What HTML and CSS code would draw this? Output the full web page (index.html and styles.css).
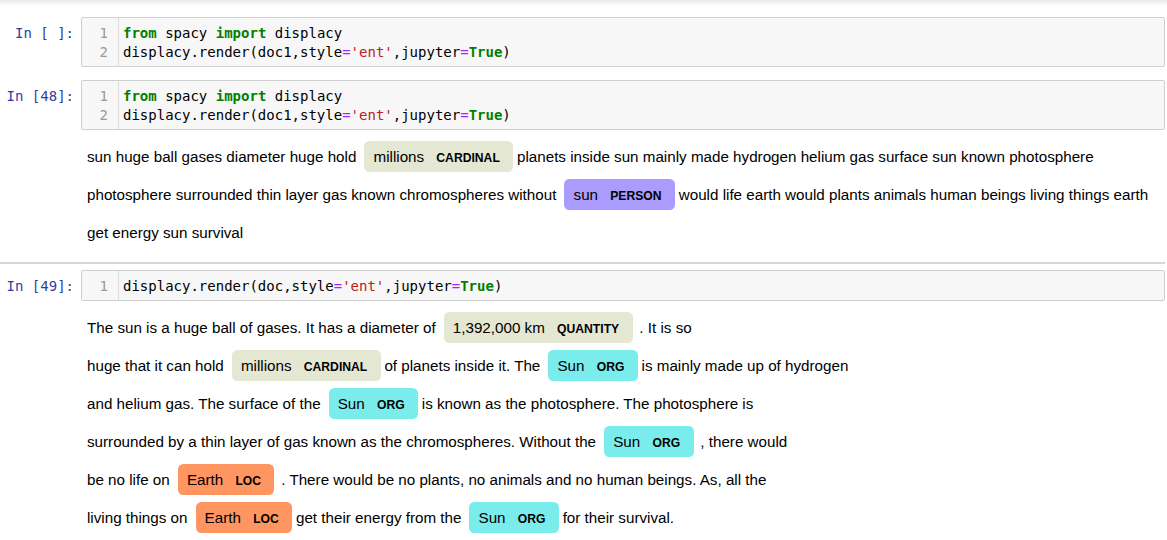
FILE: index.html
```html
<!DOCTYPE html>
<html>
<head>
<meta charset="utf-8">
<link rel="stylesheet" href="styles.css">
</head>
<body>
<div class="topbar"></div>
<div class="nb">
  <div class="cell first">
    <div class="prompt">In&nbsp;[&nbsp;]:</div>
    <div class="input">
      <div class="gutter"><div>1</div><div>2</div></div>
      <div class="code">
        <div class="ln"><span class="kw">from</span> spacy <span class="kw">import</span> displacy</div>
        <div class="ln">displacy.render(doc1,style<span class="op">=</span><span class="str">'ent'</span>,jupyter<span class="op">=</span><span class="kw">True</span>)</div>
      </div>
    </div>
  </div>

  <div class="cell">
    <div class="prompt">In&nbsp;[48]:</div>
    <div class="input">
      <div class="gutter"><div>1</div><div>2</div></div>
      <div class="code">
        <div class="ln"><span class="kw">from</span> spacy <span class="kw">import</span> displacy</div>
        <div class="ln">displacy.render(doc1,style<span class="op">=</span><span class="str">'ent'</span>,jupyter<span class="op">=</span><span class="kw">True</span>)</div>
      </div>
    </div>
    <div class="output">sun huge ball gases diameter huge hold <mark class="ent cardinal">millions <span class="lbl">CARDINAL</span> </mark> planets inside sun mainly made hydrogen helium gas surface sun known photosphere<br>photosphere surrounded thin layer gas known chromospheres without <mark class="ent person">sun <span class="lbl">PERSON</span> </mark> would life earth would plants animals human beings living things earth<br>get energy sun survival</div>
  </div>

  <div class="sep"></div>

  <div class="cell">
    <div class="prompt">In&nbsp;[49]:</div>
    <div class="input">
      <div class="gutter"><div>1</div></div>
      <div class="code">
        <div class="ln">displacy.render(doc,style<span class="op">=</span><span class="str">'ent'</span>,jupyter<span class="op">=</span><span class="kw">True</span>)</div>
      </div>
    </div>
    <div class="output">The sun is a huge ball of gases. It has a diameter of <mark class="ent cardinal">1,392,000 km <span class="lbl">QUANTITY</span> </mark> <span class="punct">. It is so</span><br>huge that it can hold <mark class="ent cardinal">millions <span class="lbl">CARDINAL</span> </mark> of planets inside it. The <mark class="ent org">Sun <span class="lbl">ORG</span> </mark> is mainly made up of hydrogen<br>and helium gas. The surface of the <mark class="ent org">Sun <span class="lbl">ORG</span> </mark> is known as the photosphere. The photosphere is<br>surrounded by a thin layer of gas known as the chromospheres. Without the <mark class="ent org">Sun <span class="lbl">ORG</span> </mark> <span class="punct">, there would</span><br>be no life on <mark class="ent loc">Earth <span class="lbl">LOC</span> </mark> <span class="punct">. There would be no plants, no animals and no human beings. As, all the</span><br>living things on <mark class="ent loc">Earth <span class="lbl">LOC</span> </mark> get their energy from the <mark class="ent org">Sun <span class="lbl">ORG</span> </mark> for their survival.</div>
  </div>
</div>
</body>
</html>
```
FILE: styles.css
```css
html, body {
  margin: 0;
  padding: 0;
  background: #fff;
}

.topbar {
  height: 6px;
  background: linear-gradient(to bottom, #e9e9e9, #ffffff);
}

.nb {
  padding: 0 2px 0 0;
}

.cell {
  display: grid;
  grid-template-columns: 81px 1fr;
  margin-top: 13px;
}

.cell.first {
  margin-top: 11px;
}

.prompt {
  font-family: "DejaVu Sans Mono", monospace;
  font-size: 14px;
  line-height: 19px;
  color: #303f9f;
  text-align: right;
  padding: 7px 7px 0 0;
  white-space: nowrap;
}

.input {
  display: flex;
  border: 1px solid #cfcfcf;
  border-radius: 2px;
  background: #f7f7f7;
  font-family: "DejaVu Sans Mono", monospace;
  font-size: 14px;
  line-height: 19px;
}

.gutter {
  width: 26px;
  padding: 6px 10px 4px 0;
  border-right: 1px solid #dddddd;
  color: #999999;
  text-align: right;
}

.code {
  padding: 6px 0 4px 4px;
  color: #000;
}

.ln {
  white-space: pre;
}

.kw {
  color: #008000;
  font-weight: bold;
}

.op {
  color: #aa22ff;
}

.str {
  color: #ba2121;
}

.output {
  grid-column: 2;
  padding: 8px 0 0 6px;
  font-family: "Liberation Sans", Arial, sans-serif;
  font-size: 15.2px;
  line-height: 38px;
  color: #000;
  white-space: nowrap;
}

.punct {
  margin-left: 3px;
}

.ent {
  padding: 0.45em 0.6em;
  margin: 0 0.25em;
  line-height: 1;
  border-radius: 0.35em;
  color: #000;
}

.lbl {
  font-size: 0.8em;
  font-weight: bold;
  line-height: 1;
  vertical-align: middle;
  margin-left: 0.5rem;
  text-transform: uppercase;
}

.cardinal { background: #e4e7d2; }
.person { background: #aa9cfc; }
.org { background: #7aecec; }
.loc { background: #ff9561; }

.sep {
  height: 2px;
  background: #d6d6d6;
  margin: 10px 0 -7px 0;
}
```
